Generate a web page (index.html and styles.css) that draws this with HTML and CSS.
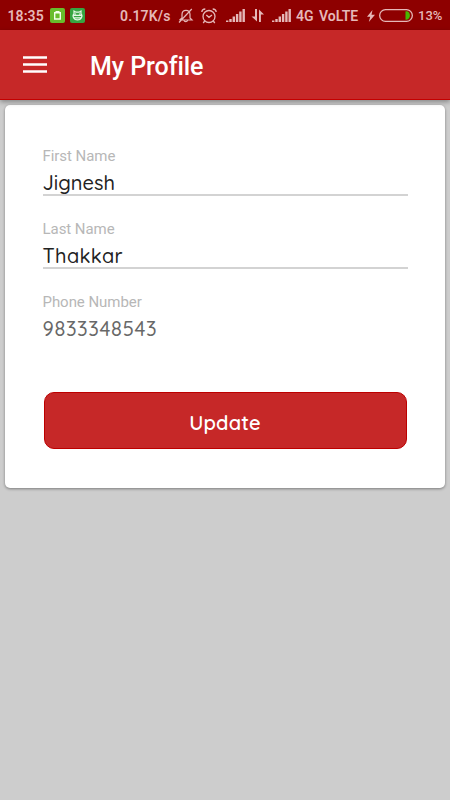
FILE: index.html
```html
<!DOCTYPE html>
<html lang="en">
<head>
<meta charset="utf-8">
<title>My Profile</title>
<link rel="stylesheet" href="styles.css">
</head>
<body>
<div class="status">
  <span class="clock">18:35</span>
  <svg class="battery-app" width="15" height="15" viewBox="0 0 15 15"><rect width="15" height="15" rx="2" fill="#68bd2c"/><path d="M5.500 3.600h4M4.700 4.700h5.600v6.300H4.700z" fill="none" stroke="#f4ffe9" stroke-width="1.400"/></svg>
  <svg class="cat-app" width="15" height="15" viewBox="0 0 15 15"><rect width="15" height="15" rx="2" fill="#36a541"/><path d="M4 6V3l2 1.200h3L11 3v3c1 1 1 3 .2 4.200C10 12.500 5 12.500 3.800 10.200 3 9 3 7 4 6zM3 7.300h9M4 9.800h7M5.500 5.500v1M9.500 5.500v1" fill="none" stroke="#e5f8e5" stroke-width="1.200"/></svg>
  <span class="speed">0.17K/s</span>
  <svg class="bell" width="16" height="16" viewBox="0 0 16 16" fill="none" stroke="#e5b8b8" stroke-width="1.200"><path d="M1.500 12h12.500l-2-2V6.500C12 4 10.500 2.300 8 2.300S4 4 4 6.500V10l-2.500 2M6 12.500c.3 1.500 3.200 1.500 3.500 0M13.800 1 1 14.500"/></svg>
  <svg class="alarm" width="16" height="16" viewBox="0 0 16 16" fill="none" stroke="#e5b8b8" stroke-width="1.300"><circle cx="8" cy="8.500" r="6"/><path d="M5.300 7 8 9.300l3-2.300M.8 4C1 2 2.500 1 4.300 1M15.200 4C15 2 13.500 1 11.700 1M3.700 13 2.200 15M12.300 13l1.500 2"/></svg>
  <svg class="signal1" width="19" height="13" viewBox="0 0 19 13" fill="#e5b8b8"><path d="M0 11.500h2.400V13H0zM3.300 10h2.400v3H3.300zM6.600 7.500H9V13H6.600zM9.900 5h2.400v8H9.900zM13.200 2.500h2.400V13h-2.400zM16.500 0h2.400v13h-2.400z"/></svg>
  <svg class="arrows" width="14" height="13" viewBox="0 0 14 13" fill="#e5b8b8"><path d="M4 0h2v12.500L.5 7.500H4zM8 .5 13 5.500H9.900V13H8z"/></svg>
  <svg class="signal2" width="19" height="13" viewBox="0 0 19 13" fill="#e5b8b8"><path d="M0 11.500h2.400V13H0zM3.300 10h2.400v3H3.300zM6.600 7.500H9V13H6.600zM9.900 5h2.400v8H9.900zM13.200 2.500h2.400V13h-2.400zM16.500 0h2.400v13h-2.400z"/></svg>
  <span class="network">4G</span>
  <span class="volte">VoLTE</span>
  <svg class="bolt" width="8" height="12" viewBox="0 0 8 12"><path d="M5.500 0 0 6.800h3.200L1.800 12 8 4.800H4.500z" fill="#e5b8b8"/></svg>
  <svg class="battery" width="34" height="13" viewBox="0 0 34 13"><rect x=".65" y=".65" width="32.700" height="11.700" rx="5.850" fill="none" stroke="#e5b8b8" stroke-width="1.300"/><path d="M26.500 2.300h1c4.500 0 4.500 8.400 0 8.400h-1z" fill="#48b800"/></svg>
  <span class="percent">13%</span>
</div>
<header class="toolbar">
  <svg class="menu" width="24" height="18" viewBox="0 0 24 18"><path d="M0 1.500h24M0 8.500h24M0 15.500h24" stroke="#fff" stroke-width="2.700"/></svg>
  <h1 class="title">My Profile</h1>
</header>
<main class="card">
  <div class="field">
    <div class="label">First Name</div>
    <div class="value"><span class="first">Jignesh</span></div>
  </div>
  <div class="field">
    <div class="label">Last Name</div>
    <div class="value"><span class="last">Thakkar</span></div>
  </div>
  <div class="field readonly">
    <div class="label">Phone Number</div>
    <div class="value"><span class="phone">9833348543</span></div>
  </div>
  <button class="update" type="button">Update</button>
</main>
</body>
</html>
```
FILE: styles.css
```css
* { box-sizing: border-box; }
body {
  margin: 0;
  height: 800px;
  overflow: hidden;
  background: #cdcdcd;
  font-family: Roboto, sans-serif;
}
svg { display: block; flex: none; }
.status {
  display: flex;
  align-items: center;
  height: 30px;
  padding: 1px 0 0 7px;
  background: #8e0000;
  color: #e5b8b8;
  font-size: 14px;
  font-weight: 600;
  line-height: 30px;
  white-space: nowrap;
}
.status span { flex: none; }
.clock { width: 43px; padding-left: .5px; letter-spacing: .1px; }
.cat-app { margin-left: 5px; }
.speed { width: 58px; margin-left: 35px; letter-spacing: .2px; }
.alarm { margin-left: 7px; }
.signal1 { margin-left: 9px; }
.arrows { margin-left: 6px; }
.signal2 { margin-left: 7px; }
.network { width: 23px; margin-left: 5px; }
.volte { width: 48px; }
.battery { margin-left: 4px; }
.percent { margin-left: 5px; font-size: 13px; font-weight: 500; }
.toolbar {
  position: relative;
  display: flex;
  align-items: center;
  height: 70px;
  padding: 3px 23px 0;
  background: #c62828;
  border-bottom: 1px solid #c40000;
  box-shadow: 0 2px 5px rgba(0, 0, 0, .35);
}
.menu { margin-top: -3px; }
.title {
  margin: 2px 0 0 43px;
  color: #fff;
  font-size: 25px;
  font-weight: 500;
  letter-spacing: -.05px;
  line-height: 34px;
}
.card {
  height: 383px;
  margin: 5px 5px 0;
  padding: 42px 37.500px 0;
  background: #fff;
  border-radius: 5px;
  box-shadow: 0 1px 3px rgba(0, 0, 0, .4);
}
.field { height: 73px; }
.label {
  height: 18px;
  color: #b7b7b7;
  font-size: 15px;
  letter-spacing: -.05px;
  line-height: 18px;
}
.value {
  height: 31px;
  padding-top: 4.500px;
  border-bottom: 2px solid #d3d3d3;
  color: #222;
  font-family: Quicksand, Lato, sans-serif;
  font-size: 20px;
  font-weight: 500;
  line-height: 26px;
}
.last { letter-spacing: .35px; }
.phone { letter-spacing: .65px; }
.readonly .value { border: 0; color: #686868; }
.update {
  display: block;
  width: 363px;
  height: 57px;
  margin: 26px 0 0 1px;
  padding: 4px 0 0;
  border: 1px solid #bd0000;
  border-radius: 10px;
  background: #c62828;
  color: #fff;
  font-family: Quicksand, Lato, sans-serif;
  font-size: 20px;
  font-weight: 600;
  letter-spacing: .15px;
}
```
